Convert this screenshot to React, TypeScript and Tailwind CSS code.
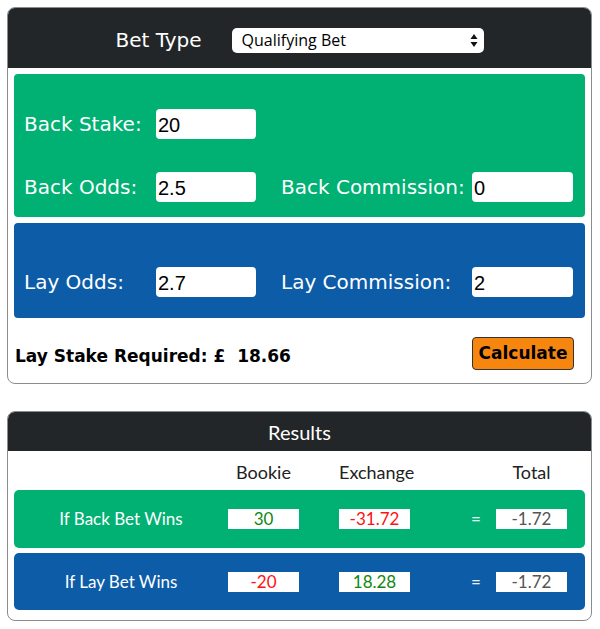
import React from 'react';

const labelFont = "font-['DejaVu_Sans',Verdana,sans-serif]";
const inputFont = "font-['Liberation_Sans',Arial,sans-serif]";
const latoFont = "font-['Lato',sans-serif]";

function Field({ value, wide }: { value: string; wide?: boolean }) {
  return (
    <input
      readOnly
      value={value}
      className={`${inputFont} h-[30px] ${wide ? 'w-[101px]' : 'w-[100px]'} rounded-[4px] bg-white px-[2px] pt-[2px] text-[20px] text-black outline-none`}
    />
  );
}

function Cell({ value, color }: { value: string; color: string }) {
  return (
    <div className={`flex h-[20px] w-[71px] items-center justify-center bg-white text-[17px] ${color}`}>
      {value}
    </div>
  );
}

function ResultRow({
  label,
  bg,
  bookie,
  bookieColor,
  exchange,
  exchangeColor,
  total,
  height,
}: {
  label: string;
  bg: string;
  bookie: string;
  bookieColor: string;
  exchange: string;
  exchangeColor: string;
  total: string;
  height: string;
}) {
  return (
    <div className={`mx-[6px] flex items-center rounded-[5px] ${bg} ${height}`}>
      <div className="w-[214px] text-center text-[17px] text-white">{label}</div>
      <Cell value={bookie} color={bookieColor} />
      <div className="w-[40px]" />
      <Cell value={exchange} color={exchangeColor} />
      <div className="w-[86px] pl-[61px] text-[17px] text-white/90">=</div>
      <Cell value={total} color="text-[#555555]" />
    </div>
  );
}

export default function App() {
  return (
    <div className="min-h-screen bg-white px-[7px] pt-[7px]">
      {/* calculator */}
      <div className="w-[585px] overflow-hidden rounded-[8px] border border-[#8c8c8c] bg-white">
        <div className="flex h-[60px] items-center justify-center gap-[30px] bg-[#232628] pt-[4px]">
          <span className={`${labelFont} text-[20px] text-white`}>Bet Type</span>
          <div className="flex h-[25px] w-[252px] items-center justify-between rounded-[5px] bg-white pl-[10px] pr-[6px]">
            <span className="font-['Open_Sans',sans-serif] text-[16px] text-black">Qualifying Bet</span>
            <svg width="8" height="15" viewBox="0 0 8 15">
              <path d="M4 1 L7.5 6 L0.5 6 Z" fill="#111" />
              <path d="M0.5 9 L7.5 9 L4 14 Z" fill="#111" />
            </svg>
          </div>
        </div>

        <div className={`${labelFont} mx-[6px] mt-[6px] h-[143px] rounded-[4px] bg-[#01b073] pl-[10px] pt-[35px] text-[20px] text-white`}>
          <div className="flex h-[30px] items-center">
            <span className="w-[132px]">Back Stake:</span>
            <Field value="20" />
          </div>
          <div className="mt-[33px] flex h-[30px] items-center">
            <span className="w-[132px]">Back Odds:</span>
            <Field value="2.5" />
            <span className="ml-[25px] w-[191px]">Back Commission:</span>
            <Field value="0" wide />
          </div>
        </div>

        <div className={`${labelFont} mx-[6px] mt-[6px] h-[95px] rounded-[4px] bg-[#0d5ca8] pl-[10px] pt-[44px] text-[20px] text-white`}>
          <div className="flex h-[30px] items-center">
            <span className="w-[132px]">Lay Odds:</span>
            <Field value="2.7" />
            <span className="ml-[25px] w-[191px]">Lay Commission:</span>
            <Field value="2" wide />
          </div>
        </div>

        <div className={`${labelFont} flex items-center justify-between pb-[13px] pl-[7px] pr-[17px] pt-[19px]`}>
          <span className="mt-[6px] text-[17px] font-bold text-black">Lay Stake Required: £{'\u00a0 '}18.66</span>
          <button className="h-[33px] w-[102px] rounded-[4px] border border-[#333] bg-[#f7860f] text-[17px] font-bold text-black">
            Calculate
          </button>
        </div>
      </div>

      {/* results */}
      <div className={`${latoFont} mt-[27px] w-[585px] overflow-hidden rounded-[8px] border border-[#8c8c8c] bg-white pb-[10px]`}>
        <div className="flex h-[39px] items-center justify-center bg-[#232628] text-[20px] text-white">Results</div>
        <div className="flex h-[39px] items-center pt-[3px] text-[18px] text-[#222]">
          <div className="w-[220px]" />
          <div className="w-[71px] text-center">Bookie</div>
          <div className="w-[40px]" />
          <div className="w-[71px] text-center">Exchange</div>
          <div className="w-[86px]" />
          <div className="w-[71px] text-center">Total</div>
        </div>
        <ResultRow
          label="If Back Bet Wins"
          bg="bg-[#01b073]"
          height="h-[58px]"
          bookie="30"
          bookieColor="text-[#118811]"
          exchange="-31.72"
          exchangeColor="text-[#ff1111]"
          total="-1.72"
        />
        <div className="h-[5px]" />
        <ResultRow
          label="If Lay Bet Wins"
          bg="bg-[#0d5ca8]"
          height="h-[57px]"
          bookie="-20"
          bookieColor="text-[#ff1111]"
          exchange="18.28"
          exchangeColor="text-[#118811]"
          total="-1.72"
        />
      </div>
    </div>
  );
}
